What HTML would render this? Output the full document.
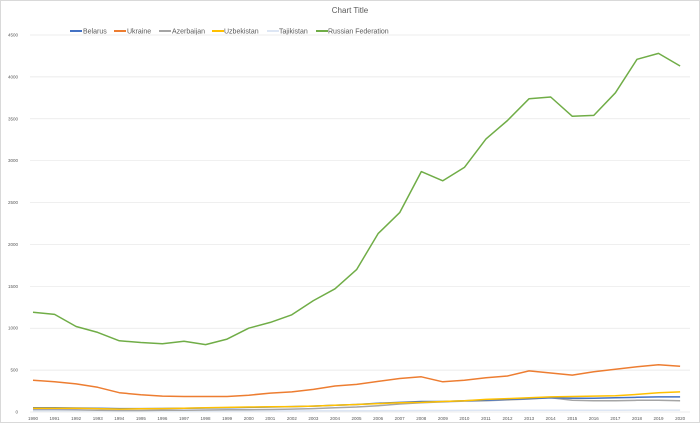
<!DOCTYPE html>
<html><head><style>
html,body{margin:0;padding:0;background:#fff;}
svg{display:block;font-family:"Liberation Sans",sans-serif;}
</style></head><body>
<svg id="c" width="700" height="423" xmlns="http://www.w3.org/2000/svg">
<rect x="0.5" y="0.5" width="699" height="422" fill="#fff" stroke="#d9d9d9"/>
<text x="350" y="13" font-size="8" fill="#595959" text-anchor="middle">Chart Title</text>
<g font-size="7" fill="#595959">
<line x1="70" y1="31" x2="82" y2="31" stroke="#4472c4" stroke-width="2"/><text x="83" y="33.5">Belarus</text>
<line x1="114" y1="31" x2="126" y2="31" stroke="#ed7d31" stroke-width="2"/><text x="127" y="33.5">Ukraine</text>
<line x1="159" y1="31" x2="171" y2="31" stroke="#a5a5a5" stroke-width="2"/><text x="172" y="33.5">Azerbaijan</text>
<line x1="212" y1="31" x2="224" y2="31" stroke="#ffc000" stroke-width="2"/><text x="224" y="33.5">Uzbekistan</text>
<line x1="267" y1="31" x2="279" y2="31" stroke="#dde6f4" stroke-width="2"/><text x="279" y="33.5">Tajikistan</text>
<line x1="316" y1="31" x2="328" y2="31" stroke="#70ad47" stroke-width="2"/><text x="328" y="33.5">Russian Federation</text>
</g>
<g id="g"></g>
</svg>
<script>
var g=document.getElementById('g'),ns='http://www.w3.org/2000/svg',h='';
function Y(v){return 412-v*(377/4500);}
function X(i){return 33+i*21.57;}
for(var k=0;k<=9;k++){var y=Y(k*500);h+='<line x1="30" x2="690" y1="'+y+'" y2="'+y+'" stroke="#e6e6e6" stroke-width="0.7"/>';
h+='<text x="18" y="'+(y+1.5)+'" font-size="4.5" fill="#595959" text-anchor="end">'+(k*500)+'</text>';}
for(var i=0;i<=30;i++)h+='<text x="'+X(i)+'" y="420" font-size="4.5" fill="#595959" text-anchor="middle">'+(1990+i)+'</text>';
var S=[
["#dde6f4",[15,15,14,13,12,12,12,12,12,13,13,14,14,15,15,16,16,17,18,18,19,20,20,21,22,22,22,22,23,23,23]],
["#a5a5a5",[30,30,28,22,18,18,20,22,24,26,28,30,35,40,50,60,75,95,110,120,130,135,145,155,170,140,135,135,140,140,135]],
["#4472c4",[50,50,48,45,40,40,42,45,48,50,55,60,65,70,80,90,105,115,125,125,135,140,150,160,170,165,165,170,175,180,180]],
["#ffc000",[45,45,45,40,35,38,40,45,50,55,60,62,65,70,80,90,100,110,115,125,135,150,160,170,180,185,190,195,210,230,240]],
["#ed7d31",[380,360,335,295,230,205,190,185,185,185,200,225,240,270,310,330,365,400,420,360,380,410,430,490,465,440,480,510,540,565,545]],
["#70ad47",[1190,1165,1020,950,850,830,815,845,805,870,1000,1070,1160,1330,1470,1700,2130,2380,2870,2760,2920,3260,3480,3740,3760,3530,3540,3810,4210,4280,4130]]];
S.forEach(function(s){var p=s[1].map(function(v,i){return X(i).toFixed(1)+','+Y(v).toFixed(1)}).join(' ');
h+='<polyline points="'+p+'" fill="none" stroke="'+s[0]+'" stroke-width="1.5" stroke-linejoin="round"/>';});
g.innerHTML=h;
</script>
</body></html>
